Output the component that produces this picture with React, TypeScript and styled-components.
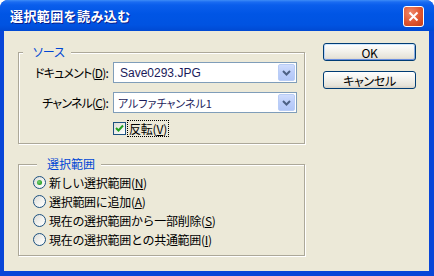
import React from 'react';
import styled, { createGlobalStyle } from 'styled-components';

// 全体の基本スタイル
const GlobalStyle = createGlobalStyle`
  html, body {
    margin: 0;
    padding: 0;
    background: #ffffff;
  }
  body {
    font-family: "Noto Sans CJK JP", "Noto Sans", sans-serif;
    font-size: 12px;
    color: #000;
  }
`;

const Window = styled.div`
  width: 434px;
  height: 276px;
  display: flex;
  flex-direction: column;
  border-radius: 8px 8px 0 0;
  overflow: hidden;
  background: #0846d8;
`;

const TitleBar = styled.div`
  height: 31px;
  flex: none;
  display: flex;
  align-items: center;
  justify-content: space-between;
  padding: 0 10px 0 10px;
  background: linear-gradient(
    to bottom,
    #3d8cf7 0px,
    #1a6cf2 2px,
    #0a5eec 5px,
    #0055e5 14px,
    #0053e1 25px,
    #0049d2 31px
  );
`;

const Title = styled.span`
  color: #fff;
  font-weight: bold;
  font-size: 13px;
  letter-spacing: 0.4px;
  text-shadow: 1px 1px 0 #0a1e8c;
`;

const CloseButton = styled.div`
  width: 19px;
  height: 19px;
  margin-top: 2px;
  border: 1px solid #fff;
  border-radius: 3px;
  display: flex;
  align-items: center;
  justify-content: center;
  background: radial-gradient(circle at 35% 30%, #f08a6c 0%, #e0552f 55%, #c33d17 100%);
`;

const Client = styled.div`
  flex: 1;
  margin: 0 5px 5px 4px;
  background: #ece9d8;
  display: flex;
  gap: 18px;
  padding: 12px 13px 0 14px;
`;

const LeftColumn = styled.div`
  width: 287px;
  display: flex;
  flex-direction: column;
  gap: 12px;
  padding-top: 1px;
`;

const RightColumn = styled.div`
  width: 93px;
  display: flex;
  flex-direction: column;
  gap: 10px;
`;

const Group = styled.fieldset<{ $pad: string }>`
  margin: 0;
  min-width: 0;
  padding: ${({ $pad }) => $pad};
  border: 1px solid #aca899;
  box-shadow: 1px 1px 0 #fff, inset 1px 1px 0 #fff;
`;

const Legend = styled.legend`
  margin-left: 4px;
  padding: 0 6px 0 10px;
  line-height: 16px;
  font-size: 12px;
  color: #0046d5;
  background: #ece9d8;
  font-feature-settings: "palt";
`;

const FormGrid = styled.div`
  display: grid;
  grid-template-columns: 94px 184px;
  row-gap: 9px;
  align-items: center;
`;

const FieldLabel = styled.label`
  text-align: right;
  padding-right: 5px;
  white-space: nowrap;
  letter-spacing: -0.8px;
  font-feature-settings: "palt";
`;

const Combo = styled.div`
  height: 21px;
  box-sizing: border-box;
  border: 1px solid #7f9db9;
  background: #fff;
  display: flex;
  align-items: center;
  padding: 1px;
`;

const ComboText = styled.span<{ $latin?: boolean }>`
  flex: 1;
  padding-left: ${({ $latin }) => ($latin ? '5px' : '3px')};
  font-family: ${({ $latin }) => ($latin ? '"Liberation Sans", Arial, sans-serif' : '"Noto Sans CJK JP", sans-serif')};
  font-size: ${({ $latin }) => ($latin ? '12px' : '11px')};
  color: #1a1a5a;
  white-space: nowrap;
  font-feature-settings: "palt";
`;

const DropButton = styled.div`
  width: 15px;
  height: 15px;
  border: 1px solid #b9cdf6;
  border-radius: 2px;
  background: linear-gradient(to bottom, #d0ddfd 0%, #bccefa 50%, #b1c6f7 100%);
  display: flex;
  align-items: center;
  justify-content: center;
`;

const CheckRow = styled.div`
  grid-column: 2;
  display: flex;
  align-items: center;
  gap: 2px;
  margin-top: -1px;
`;

const CheckBox = styled.div`
  width: 11px;
  height: 11px;
  border: 1px solid #1c5180;
  background: linear-gradient(135deg, #dcdcd7 0%, #fff 100%);
  display: flex;
  align-items: center;
  justify-content: center;
`;

const FocusLabel = styled.span`
  outline: 1px dotted #000;
  padding: 0 1px;
  line-height: 15px;
  letter-spacing: -0.2px;
  font-feature-settings: "palt";
`;

const RadioList = styled.div`
  display: flex;
  flex-direction: column;
`;

const RadioRow = styled.div`
  height: 19px;
  display: flex;
  align-items: center;
  gap: 3px;
  white-space: nowrap;
  letter-spacing: -0.3px;
`;

const RadioCircle = styled.div<{ $checked?: boolean }>`
  width: 11px;
  height: 11px;
  border-radius: 50%;
  border: 1px solid #1c5180;
  background: linear-gradient(135deg, #dcdcd7 0%, #f4f4f1 60%, #fff 100%);
  display: flex;
  align-items: center;
  justify-content: center;
  &::after {
    content: '';
    display: ${({ $checked }) => ($checked ? 'block' : 'none')};
    width: 5px;
    height: 5px;
    border-radius: 50%;
    background: radial-gradient(circle at 40% 40%, #7fd47a 0%, #2fa52f 60%, #1a8a1a 100%);
  }
`;

const Button = styled.div<{ $default?: boolean }>`
  height: 18px;
  box-sizing: border-box;
  border: 1px solid #003c74;
  border-radius: 3px;
  background: linear-gradient(to bottom, #ffffff 0%, #f4f3ee 40%, #e6e3d9 85%, #d6d0c5 100%);
  box-shadow: ${({ $default }) =>
    $default ? 'inset 0 1px 0 #cee7ff, inset 1px 0 0 #bcd4f6, inset -1px 0 0 #89ade4, inset 0 -1px 0 #6a8ee0' : 'none'};
  display: flex;
  align-items: center;
  justify-content: center;
  font-size: 12px;
  letter-spacing: -0.3px;
  font-feature-settings: "palt";
`;

const options = [
  { text: '新しい選択範囲', key: 'N', checked: true },
  { text: '選択範囲に追加', key: 'A' },
  { text: '現在の選択範囲から一部削除', key: 'S' },
  { text: '現在の選択範囲との共通範囲', key: 'I' },
];

const Arrow = () => (
  <svg width="9" height="6" viewBox="0 0 9 6">
    <path d="M1 1 L4.5 4.5 L8 1" fill="none" stroke="#4d6185" strokeWidth="2" />
  </svg>
);

export default function App() {
  return (
    <>
      <GlobalStyle />
      <Window>
        <TitleBar>
          <Title>選択範囲を読み込む</Title>
          <CloseButton>
            <svg width="11" height="11" viewBox="0 0 11 11">
              <path d="M1.5 1.5 L9.5 9.5 M9.5 1.5 L1.5 9.5" stroke="#fff" strokeWidth="2" />
            </svg>
          </CloseButton>
        </TitleBar>
        <Client>
          <LeftColumn>
            <Group $pad="2px 6px 7px 0">
              <Legend>ソース</Legend>
              <FormGrid>
                <FieldLabel>
                  ドキュメント(<u>D</u>):
                </FieldLabel>
                <Combo>
                  <ComboText $latin>Save0293.JPG</ComboText>
                  <DropButton>
                    <Arrow />
                  </DropButton>
                </Combo>
                <FieldLabel>
                  チャンネル(<u>C</u>):
                </FieldLabel>
                <Combo>
                  <ComboText>アルファチャンネル1</ComboText>
                  <DropButton>
                    <Arrow />
                  </DropButton>
                </Combo>
                <CheckRow>
                  <CheckBox>
                    <svg width="9" height="9" viewBox="0 0 9 9">
                      <path d="M1 4 L3.5 6.5 L8 1.5" fill="none" stroke="#21a121" strokeWidth="2" />
                    </svg>
                  </CheckBox>
                  <FocusLabel>
                    反転(<u>V</u>)
                  </FocusLabel>
                </CheckRow>
              </FormGrid>
            </Group>
            <Group $pad="1px 6px 6px 14px">
              <Legend>選択範囲</Legend>
              <RadioList>
                {options.map((o) => (
                  <RadioRow key={o.key}>
                    <RadioCircle $checked={o.checked} />
                    <span>
                      {o.text}(<u>{o.key}</u>)
                    </span>
                  </RadioRow>
                ))}
              </RadioList>
            </Group>
          </LeftColumn>
          <RightColumn>
            <Button $default>OK</Button>
            <Button>キャンセル</Button>
          </RightColumn>
        </Client>
      </Window>
    </>
  );
}
